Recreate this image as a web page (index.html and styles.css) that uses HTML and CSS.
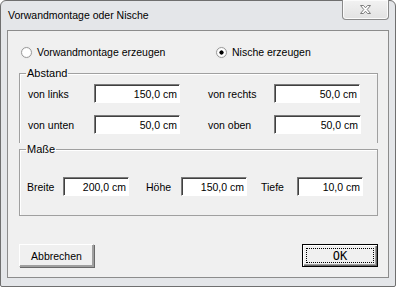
FILE: index.html
```html
<!DOCTYPE html>
<html lang="de">
<head>
    <meta charset="UTF-8">
    <title>Vorwandmontage oder Nische</title>
    <link rel="stylesheet" href="styles.css">
</head>
<body>
    <div class="window">
        <div class="titlebar">
            <span class="title">Vorwandmontage oder Nische</span>
            <button class="close-btn" aria-label="Schließen">
                <svg width="15" height="11" viewBox="0 0 15 11">
                    <path d="M2.5 1.5 H5.5 L7.5 3.8 L9.5 1.5 H12.5 L9.2 5.5 L12.5 9.5 H9.5 L7.5 7.2 L5.5 9.5 H2.5 L5.8 5.5 Z" fill="#fff" stroke="#7d7d7d" stroke-width="1" stroke-linejoin="round"/>
                </svg>
            </button>
        </div>
        <div class="client">
            <div class="radio-row">
                <label class="radio"><input type="radio" name="mode"> Vorwandmontage erzeugen</label>
                <label class="radio"><input type="radio" name="mode" checked> Nische erzeugen</label>
            </div>

            <fieldset class="group group-abstand">
                <legend>Abstand</legend>
                <div class="field-grid">
                    <label>von links</label>
                    <input class="field" type="text" value="150,0 cm">
                    <label>von rechts</label>
                    <input class="field" type="text" value="50,0 cm">
                    <label>von unten</label>
                    <input class="field" type="text" value="50,0 cm">
                    <label>von oben</label>
                    <input class="field" type="text" value="50,0 cm">
                </div>
            </fieldset>

            <fieldset class="group group-masse">
                <legend>Maße</legend>
                <div class="size-row">
                    <label class="lbl-breite">Breite</label>
                    <input class="field small" type="text" value="200,0 cm">
                    <label class="lbl-hoehe">Höhe</label>
                    <input class="field small" type="text" value="150,0 cm">
                    <label class="lbl-tiefe">Tiefe</label>
                    <input class="field small" type="text" value="10,0 cm">
                </div>
            </fieldset>

            <div class="button-row">
                <button class="btn">Abbrechen</button>
                <button class="btn btn-default"><span class="focus">OK</span></button>
            </div>
        </div>
    </div>
</body>
</html>
```

FILE: styles.css
```css
body {
    margin: 0;
    font-family: "Liberation Sans", Arial, sans-serif;
    font-size: 10.5px;
    color: #000;
    background: #fff;
}

.window {
    width: 396px;
    height: 287px;
    box-sizing: border-box;
    border: 1px solid #6f6f6f;
    border-radius: 6px 6px 2px 2px;
    background-color: #e4e6e9;
    padding: 0 6px 8px 6px;
    display: flex;
    flex-direction: column;
}

.titlebar {
    height: 29px;
    display: flex;
    align-items: flex-start;
    justify-content: space-between;
}

.title {
    margin-top: 8px;
    margin-left: 1px;
    font-size: 10.5px;
    color: #000;
}

.close-btn {
    width: 47px;
    height: 20px;
    margin-top: -1px;
    margin-right: 0;
    padding: 0;
    border: 1px solid #8a8a8a;
    border-top: none;
    border-radius: 0 0 4px 4px;
    background: linear-gradient(#f2f2f2, #e2e2e2);
    box-shadow: inset 0 0 0 1px #fbfbfb;
    display: flex;
    align-items: center;
    justify-content: center;
}

.client {
    flex: 1;
    border: 1px solid #8c8c8c;
    background-color: #f0f0f0;
}

.radio-row {
    display: flex;
    padding: 11px 0 0 12px;
    height: 20px;
}

.radio {
    display: flex;
    align-items: center;
    gap: 5px;
}

.radio:first-child {
    width: 195px;
}

.radio input {
    appearance: none;
    -webkit-appearance: none;
    margin: 0 0 0 1px;
    width: 11px;
    height: 11px;
    border-radius: 50%;
    border: 1px solid #9a9a9a;
    background: radial-gradient(circle, #fff 55%, #e6e6e6 100%);
    box-shadow: 0 0 0 1px #ececec;
}

.radio input:checked {
    background: radial-gradient(circle, #000 0 1.8px, #fff 2.4px 55%, #e6e6e6 100%);
}

.group {
    margin: 0 10px 0 11px;
    padding: 0;
    border: 1px solid #a0a0a0;
    box-shadow: inset 1px 1px 0 #fff;
    min-width: 0;
}

.group legend {
    margin-left: 6px;
    padding: 0 1px;
    font-size: 11px;
    line-height: 13px;
}

.group-abstand {
    margin-top: 5px;
    border-bottom: none;
    height: 75px;
}

.group-masse {
    height: 71px;
}

.field-grid {
    display: grid;
    grid-template-columns: 66px 114px 66px 87px;
    row-gap: 12px;
    align-items: center;
    padding: 4px 0 0 8px;
}

.field {
    box-sizing: border-box;
    height: 19px;
    width: 86px;
    margin: 0;
    padding: 0 2px 0 2px;
    border: 1px solid #fff;
    border-top-color: #7a7a7a;
    border-left-color: #7a7a7a;
    box-shadow: inset 1px 1px 0 #404040;
    background: #fff;
    font-family: "Liberation Sans", Arial, sans-serif;
    font-size: 10.5px;
    text-align: right;
    color: #000;
    outline: none;
}

.field-grid .field:last-child {
    width: 87px;
}

.size-row {
    display: flex;
    align-items: center;
    padding: 21px 0 0 7px;
}

.field.small {
    width: 66px;
}

.lbl-breite {
    width: 36px;
}

.lbl-hoehe {
    margin-left: 17px;
    width: 35px;
}

.lbl-tiefe {
    margin-left: 14px;
    width: 36px;
}

.button-row {
    display: flex;
    justify-content: space-between;
    padding: 28px 10px 0 11px;
}

.btn {
    box-sizing: border-box;
    width: 75px;
    height: 23px;
    padding: 0;
    background: #f0f0f0;
    border: 1px solid #a0a0a0;
    border-top-color: #fff;
    border-left-color: #fff;
    box-shadow: 1px 1px 0 #696969, inset -1px -1px 0 #a0a0a0;
    font-family: "Liberation Sans", Arial, sans-serif;
    font-size: 10.5px;
    color: #000;
}

.btn-default {
    width: 76px;
    border: 1px solid #000;
    box-shadow: inset 1px 1px 0 #fff, inset -1px -1px 0 #696969, inset -2px -2px 0 #a0a0a0;
    display: flex;
    padding: 3px;
}

.btn-default .focus {
    flex: 1;
    border: 1px dotted #000;
    display: flex;
    align-items: center;
    justify-content: center;
    font-size: 12px;
    font-family: "DejaVu Sans Mono", monospace;
}
```
